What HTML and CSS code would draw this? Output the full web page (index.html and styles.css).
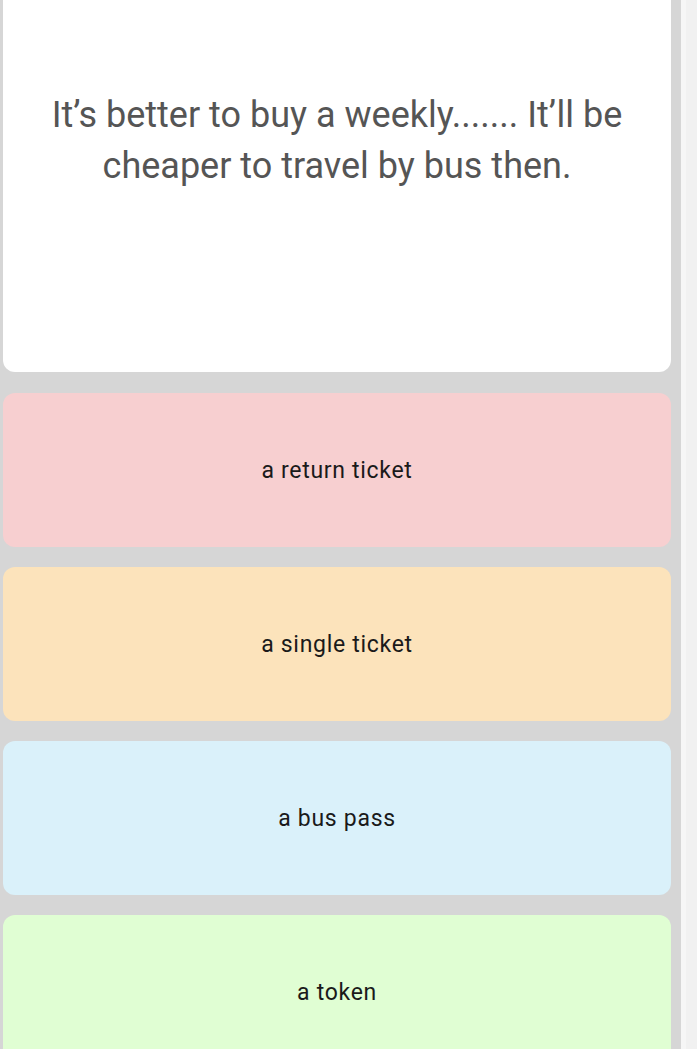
FILE: index.html
```html
<!DOCTYPE html>
<html lang="en">
<head>
    <meta charset="UTF-8">
    <meta name="viewport" content="width=device-width, initial-scale=1.0">
    <title>Quiz</title>
    <link rel="stylesheet" href="styles.css">
</head>
<body>
    <div class="page">
        <div class="quiz">
            <div class="question-card">
                <p class="question">It’s better to buy a weekly....... It’ll be cheaper to travel by bus then.</p>
            </div>

            <div class="answers">
                <div class="answer answer-red">a return ticket</div>
                <div class="answer answer-orange">a single ticket</div>
                <div class="answer answer-blue">a bus pass</div>
                <div class="answer answer-green">a token</div>
            </div>
        </div>

        <!-- fausse barre de défilement -->
        <div class="scrollbar"></div>
    </div>
</body>
</html>
```

FILE: styles.css
```css
body {
    margin: 0;
    height: 100vh;
    overflow: hidden;
    font-family: 'Roboto', 'Liberation Sans', sans-serif;
    background: #d6d6d6;
}

.page {
    display: flex;
    height: 100%;
}

.quiz {
    flex: 1;
    padding: 0 10px 0 3px;
    overflow: hidden;
}

.question-card {
    background: #fff;
    border-radius: 0 0 12px 12px;
    height: 372px;
    box-sizing: border-box;
    padding: 90px 30px 0;
}

.question {
    margin: 0;
    text-align: center;
    font-size: 36px;
    font-weight: 400;
    line-height: 51px;
    color: #555;
}

.answers {
    display: flex;
    flex-direction: column;
    gap: 20px;
    margin-top: 21px;
}

.answer {
    height: 154px;
    border-radius: 12px;
    display: flex;
    justify-content: center;
    align-items: center;
    font-size: 23px;
    letter-spacing: 0.7px;
    color: #1a1a1a;
    flex-shrink: 0;
}

.answer-red { background: #f7cfd0; }
.answer-orange { background: #fce3bb; }
.answer-blue { background: #daf1fa; }
.answer-green { background: #e0fed3; }

.scrollbar {
    width: 16px;
    background: #f1f1f1;
    border-left: 5px solid #f6f6f6;
    box-sizing: border-box;
}
```
